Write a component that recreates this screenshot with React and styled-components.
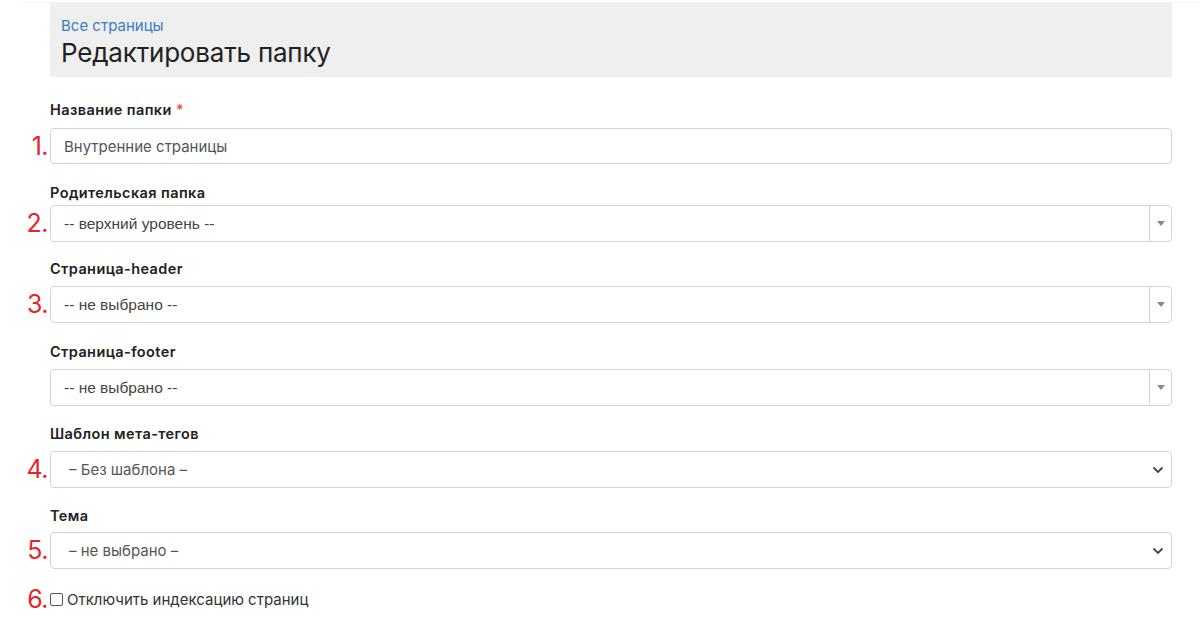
import React from "react";
import styled, { createGlobalStyle } from "styled-components";

const Global = createGlobalStyle`
  html, body { margin: 0; padding: 0; background: #fff; }
  body { font-family: Inter, "Noto Sans", sans-serif; color: #222; }
  * { box-sizing: border-box; }
`;

const Page = styled.div`
  width: 1200px;
  height: 634px;
  overflow: hidden;
  padding-top: 2px;
`;

const TopLine = styled.div`
  margin-left: 20px;
  height: 1px;
  background: #f3f3f3;
`;

const Row = styled.div`
  display: grid;
  grid-template-columns: 50px 1122px;
  align-items: center;
  margin-top: ${(p) => p.$mt || 0}px;
`;

const Num = styled.div`
  font-family: Inter, sans-serif;
  font-size: 25px;
  color: #e8242a;
  text-align: right;
  padding-right: 2px;
  line-height: 1;
  letter-spacing: -0.5px;
`;

const Header = styled.div`
  grid-column: 2;
  background: #efefef;
  height: 74px;
  padding: 13px 11px 0;
`;

const Crumb = styled.a`
  display: block;
  font-size: 15px;
  color: #3b7dc4;
  line-height: 20px;
  text-decoration: none;
`;

const Title = styled.h1`
  margin: 0;
  font-weight: 400;
  font-size: 26px;
  line-height: 33px;
  color: #222;
  letter-spacing: -0.2px;
`;

const Label = styled.div`
  grid-column: 2;
  font-size: 14.5px;
  font-weight: 600;
  color: #222;
  line-height: 20px;
  letter-spacing: 0.4px;
`;

const Star = styled.span`
  color: #e8524e;
  margin-left: 4px;
`;

const Input = styled.div`
  height: 36px;
  border: 1px solid #d4d4d4;
  border-radius: 4px;
  display: flex;
  align-items: center;
  padding-left: 13px;
  font-size: 15px;
  color: #555;
`;

const Chosen = styled.div`
  height: 37px;
  border: 1px solid #d4d4d4;
  border-radius: 4px;
  display: flex;
  align-items: stretch;
  font-family: "Liberation Sans", Arial, sans-serif;
  font-size: 15.5px;
  color: #444;
`;

const ChosenText = styled.div`
  flex: 1;
  display: flex;
  align-items: center;
  padding-left: 13px;
`;

const ChosenArrow = styled.div`
  width: 22px;
  border-left: 1px solid #d4d4d4;
  display: flex;
  align-items: center;
  justify-content: center;
`;

const Tri = styled.div`
  width: 0;
  height: 0;
  border-left: 4px solid transparent;
  border-right: 4px solid transparent;
  border-top: 5px solid #888;
`;

const Select = styled.div`
  height: 37px;
  border: 1px solid #d4d4d4;
  border-radius: 4px;
  display: flex;
  align-items: center;
  justify-content: space-between;
  padding: 0 7px 0 18px;
  font-size: 15px;
  color: #555;
`;

const CheckRow = styled.label`
  grid-column: 2;
  display: flex;
  align-items: center;
  gap: 4px;
  font-size: 15px;
  color: #333;
`;

const Box = styled.span`
  width: 13px;
  height: 13px;
  border: 1px solid #555;
  border-radius: 2px;
  background: #fff;
`;

const Chevron = () => (
  <svg width="12" height="8" viewBox="0 0 12 8">
    <path d="M1.5 1.5 L6 6 L10.5 1.5" fill="none" stroke="#444" strokeWidth="1.8" />
  </svg>
);

function ChosenField({ text }) {
  return (
    <Chosen>
      <ChosenText>{text}</ChosenText>
      <ChosenArrow>
        <Tri />
      </ChosenArrow>
    </Chosen>
  );
}

export default function App() {
  return (
    <Page>
      <Global />
      <TopLine />
      <Row>
        <Header>
          <Crumb href="#">Все страницы</Crumb>
          <Title>Редактировать папку</Title>
        </Header>
      </Row>

      <Row $mt={23}>
        <Label>
          Название папки<Star>*</Star>
        </Label>
      </Row>
      <Row $mt={8}>
        <Num>1.</Num>
        <Input>Внутренние страницы</Input>
      </Row>

      <Row $mt={19}>
        <Label>Родительская папка</Label>
      </Row>
      <Row $mt={2}>
        <Num>2.</Num>
        <ChosenField text="-- верхний уровень --" />
      </Row>

      <Row $mt={17}>
        <Label>Страница-header</Label>
      </Row>
      <Row $mt={7}>
        <Num>3.</Num>
        <ChosenField text="-- не выбрано --" />
      </Row>

      <Row $mt={19}>
        <Label>Страница-footer</Label>
      </Row>
      <Row $mt={7}>
        <Num />
        <ChosenField text="-- не выбрано --" />
      </Row>

      <Row $mt={18}>
        <Label>Шаблон мета-тегов</Label>
      </Row>
      <Row $mt={7}>
        <Num>4.</Num>
        <Select>
          <span>– Без шаблона –</span>
          <Chevron />
        </Select>
      </Row>

      <Row $mt={18}>
        <Label>Тема</Label>
      </Row>
      <Row $mt={6}>
        <Num>5.</Num>
        <Select>
          <span>– не выбрано –</span>
          <Chevron />
        </Select>
      </Row>

      <Row $mt={18}>
        <Num>6.</Num>
        <CheckRow>
          <Box />
          Отключить индексацию страниц
        </CheckRow>
      </Row>
    </Page>
  );
}
